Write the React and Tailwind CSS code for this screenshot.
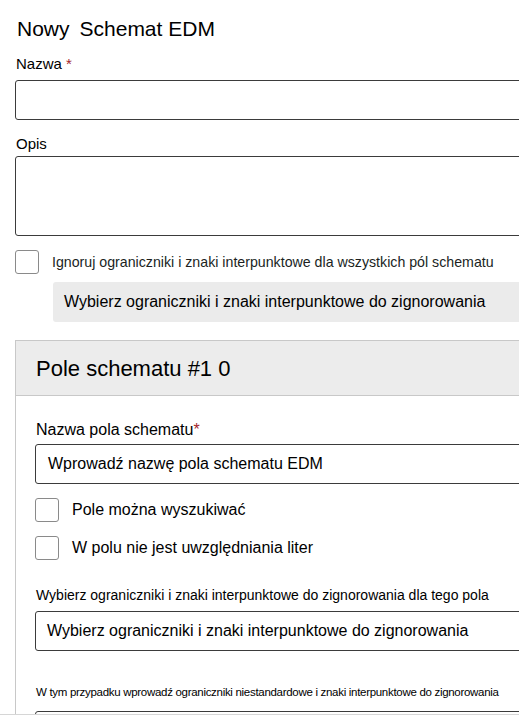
export default function App() {
  return (
    <div className="relative h-[725px] w-[519px] overflow-hidden bg-white font-['Liberation_Sans',Arial,sans-serif] text-black">
      <div className="pl-[15px]">
        <h1 className="pt-[16px] pl-[2px] text-[21px] leading-[26px]">
          Nowy<span className="ml-[10px]">Schemat EDM</span>
        </h1>
        <div className="mt-[13px] text-[15px] leading-[18px] pl-[1px]">
          Nazwa <span className="text-[#a4262c]">*</span>
        </div>
        <div className="mt-[7px] h-[40px] w-[520px] rounded-[3px] border border-[#3b3b3b]" />
        <div className="mt-[15px] text-[15px] leading-[18px] pl-[1px]">Opis</div>
        <div className="mt-[3px] h-[80px] w-[520px] rounded-[3px] border border-[#3b3b3b]" />
        <div className="mt-[14px] flex items-center">
          <div className="h-[24px] w-[24px] rounded-[3px] border border-[#8a8a8a]" />
          <span className="ml-[13px] text-[14.2px] leading-[16px] text-[#201f1e]">
            Ignoruj ograniczniki i znaki interpunktowe dla wszystkich pól schematu
          </span>
        </div>
        <div className="ml-[38px] mt-[8px] flex h-[40px] w-[520px] items-center rounded-[3px] bg-[#ebebeb] pl-[11px] text-[16px]">
          Wybierz ograniczniki i znaki interpunktowe do zignorowania
        </div>
        <div className="mt-[18px] w-[520px] border-l border-t border-[#c8c8c8]">
          <div className="flex h-[55px] items-center border-b border-[#c8c8c8] bg-[#ececec] pl-[20px] text-[22px]">
            Pole schematu #1 0
          </div>
          <div className="pl-[19px] pb-[4px]">
            <div className="mt-[25px] text-[16px] leading-[18px] pl-[1px]">
              Nazwa pola schematu<span className="text-[#a4262c]">*</span>
            </div>
            <div className="mt-[5px] flex h-[40px] items-center rounded-[3px] border border-[#3b3b3b] pl-[12px] text-[16px]">
              Wprowadź nazwę pola schematu EDM
            </div>
            <div className="mt-[14px] flex items-center">
              <div className="h-[24px] w-[24px] rounded-[3px] border border-[#8a8a8a]" />
              <span className="ml-[13px] text-[16px]">Pole można wyszukiwać</span>
            </div>
            <div className="mt-[14px] flex items-center">
              <div className="h-[24px] w-[24px] rounded-[3px] border border-[#8a8a8a]" />
              <span className="ml-[13px] text-[16px]">W polu nie jest uwzględniania liter</span>
            </div>
            <div className="mt-[27px] text-[14px] leading-[16px] pl-[1px]">
              Wybierz ograniczniki i znaki interpunktowe do zignorowania dla tego pola
            </div>
            <div className="mt-[8px] flex h-[40px] items-center rounded-[3px] border border-[#3b3b3b] pl-[11px] text-[16px]">
              Wybierz ograniczniki i znaki interpunktowe do zignorowania
            </div>
            <div className="mt-[34px] text-[11.5px] leading-[14px] tracking-[-0.3px] pl-[1px]">
              W tym przypadku wprowadź ograniczniki niestandardowe i znaki interpunktowe do zignorowania
            </div>
            <div className="mt-[12px] h-[40px] rounded-[3px] border border-[#3b3b3b]" />
          </div>
        </div>
      </div>
      <div className="absolute left-0 right-0 top-[714px] h-[11px] border-t border-[#d6d6d6] bg-white" />
    </div>
  );
}
